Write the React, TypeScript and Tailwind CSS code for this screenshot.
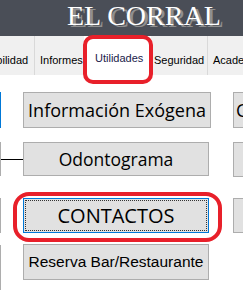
export default function App() {
  const sans = { fontFamily: '"Liberation Sans", Arial, sans-serif' };
  const ui = { fontFamily: '"Open Sans", "Noto Sans", sans-serif' };

  return (
    <div className="w-[243px] h-[290px] overflow-hidden bg-white relative" style={sans}>
      {/* header */}
      <div className="h-[36px] bg-[#4a4e57] pl-[67px] pt-[4px]">
        <span
          className="block text-[28px] leading-[24px] text-white whitespace-nowrap [text-shadow:3px_2px_0_#8f8f8f]"
          style={{ fontFamily: '"Liberation Serif", "Times New Roman", serif' }}
        >
          EL CORRAL
        </span>
      </div>

      {/* tabs */}
      <div className="h-[39px] bg-[#f0f0f0] flex text-[11px] text-black -ml-[39px] whitespace-nowrap">
        <div className="w-[74px] shrink-0 border-r border-[#d9d9d9] pl-[6px] pt-[16px]">Contabilidad</div>
        <div className="w-[49px] shrink-0 pl-[5px] pt-[16px]">Informes</div>
        <div className="w-[67px] shrink-0 bg-white h-[44px] pl-[11px] pt-[14px] text-[#1a1a4a]">Utilidades</div>
        <div className="w-[57px] shrink-0 border-r border-[#d9d9d9] pl-[3px] pt-[16px]">Seguridad</div>
        <div className="w-[60px] shrink-0 pl-[5px] pt-[16px]">Academia</div>
      </div>

      {/* button grid */}
      <div className="flex flex-col pt-[17px] -ml-[187px] whitespace-nowrap" style={ui}>
        <div className="flex items-start h-[50px]">
          <div className="w-[188px] shrink-0 h-[36px] bg-[#e1e1e1] border border-[#0078d7]" />
          <div className="w-[22px] shrink-0" />
          <button className="w-[188px] shrink-0 h-[36px] bg-[#e1e1e1] border border-[#adadad] text-[18px] text-black">
            Información Exógena
          </button>
          <div className="w-[22px] shrink-0" />
          <button className="w-[120px] shrink-0 h-[36px] bg-[#e1e1e1] border border-[#adadad] text-[18px] text-black text-left pl-[2px]">
            Conciliación
          </button>
        </div>
        <div className="flex items-start h-[56px]">
          <div className="w-[188px] shrink-0 h-[34px] bg-[#e1e1e1] border border-[#adadad]" />
          <div className="w-[22px] shrink-0 h-[34px] flex items-center">
            <div className="w-full h-px bg-black" />
          </div>
          <button className="w-[186px] shrink-0 h-[34px] bg-[#e1e1e1] border border-[#adadad] text-[17.5px] text-black">
            Odontograma
          </button>
          <div className="w-[24px] shrink-0" />
          <div className="w-[120px] shrink-0 h-[35px] bg-[#e1e1e1] border border-[#adadad]" />
        </div>
        <div className="flex items-start h-[46px]">
          <div className="w-[188px] shrink-0 h-[35px] bg-[#e1e1e1] border border-[#adadad]" />
          <div className="w-[22px] shrink-0" />
          <button className="w-[186px] shrink-0 h-[35px] bg-[#e1e1e1] border border-[#0078d7] p-[1px] text-[20px] text-black">
            <div className="w-full h-full border border-dotted border-[#333] flex items-center justify-center">
              CONTACTOS
            </div>
          </button>
          <div className="w-[24px] shrink-0" />
          <div className="w-[120px] shrink-0 h-[35px] bg-[#e1e1e1] border border-[#adadad]" />
        </div>
        <div className="flex items-start">
          <div className="w-[188px] shrink-0 h-[50px] bg-[#e1e1e1] border border-[#adadad] mt-[1px]" />
          <div className="w-[22px] shrink-0" />
          <button
            className="w-[186px] shrink-0 h-[36px] bg-[#e1e1e1] border border-[#adadad] text-[15.5px] text-black"
            style={sans}
          >
            Reserva Bar/Restaurante
          </button>
        </div>
      </div>

      {/* red annotation rings */}
      <div className="absolute left-[83px] top-[35px] w-[70px] h-[49px] border-[4px] border-[#e8202a] rounded-[10px]" />
      <div className="absolute left-[13px] top-[192px] w-[209px] h-[50px] border-[4px] border-[#e8202a] rounded-[16px]" />
    </div>
  );
}
